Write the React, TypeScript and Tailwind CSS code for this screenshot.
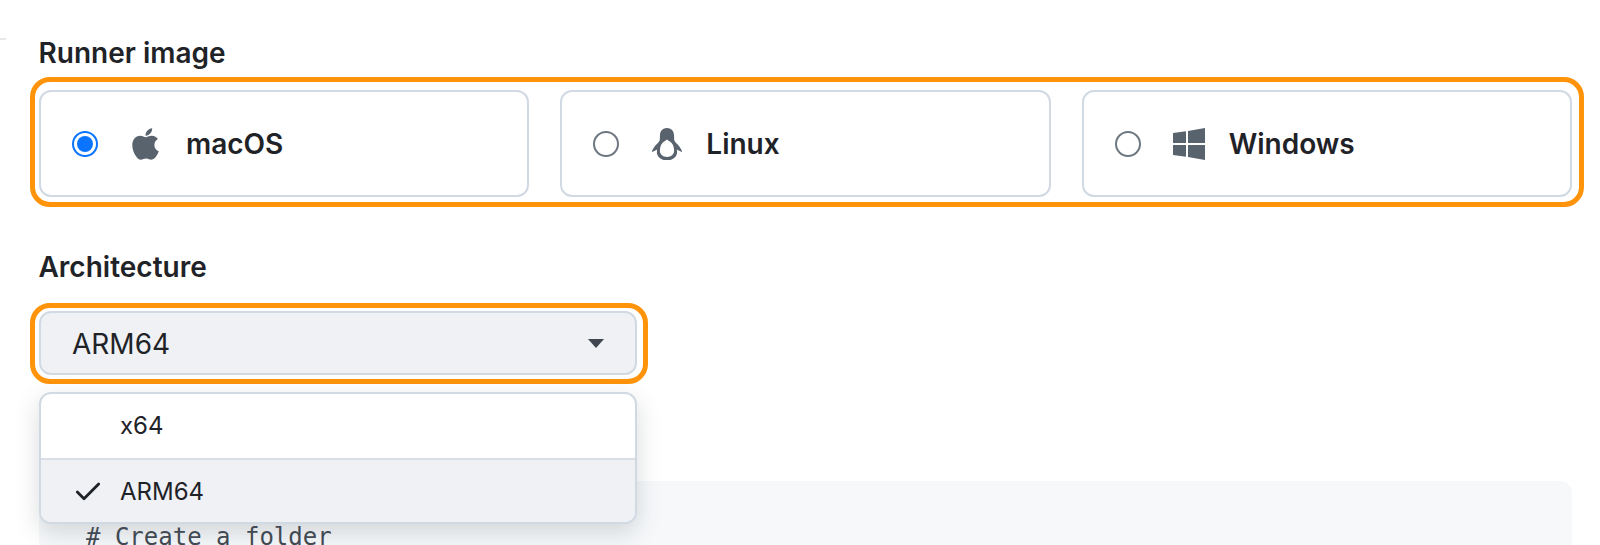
import React from 'react'
import { FaApple } from 'react-icons/fa'
import { Check } from 'lucide-react'

const LinuxIcon = () => (
  <svg viewBox="0 0 30 32" className="w-[30px] h-[32px] fill-[#59636e]">
    <path
      fillRule="evenodd"
      d="M15 0c4.200 0 6.900 3 7 7l.2 4.400c.2 1.600 1.200 2.900 2.700 4.400 2 2 3.800 4.400 5.100 7.200.2.500-.3 1-.8.7l-4.400-2.200c.2 1 .3 1.700.3 2.500 0 4.700-4.200 8.400-10.100 8.400S4.900 28.700 4.900 24c0-.8.100-1.500.3-2.500L.8 23.700c-.5.300-1-.2-.8-.7 1.300-2.800 3.100-5.200 5.100-7.200 1.500-1.500 2.500-2.800 2.700-4.400L8 7c.1-4 2.800-7 7-7zm0 11.600c-1.700 1.400-3.200 2-4.600 3.300-1.700 1.700-2.500 4.600-2.500 8.100 0 3.300 3.100 5.900 7.100 5.900s7.100-2.600 7.100-5.900c0-3.500-.8-6.400-2.500-8.100-1.400-1.300-2.900-1.900-4.600-3.300z"
    />
  </svg>
)

const WindowsIcon = () => (
  <svg viewBox="0 0 32 32" className="w-[32px] h-[32px] fill-[#59636e]">
    <polygon points="0,5 13,3.200 13,15 0,15" />
    <polygon points="15,2.900 32,0 32,15 15,15" />
    <polygon points="0,17 13,17 13,28.800 0,27" />
    <polygon points="15,17 32,17 32,32 15,29.100" />
  </svg>
)

const runners = [
  { name: 'macOS', selected: true, icon: <FaApple className="w-[36px] h-[36px] text-[#59636e]" />, iconBox: 'w-[33px] ml-[31px]', gap: 'ml-[24px]' },
  { name: 'Linux', selected: false, icon: <LinuxIcon />, iconBox: 'w-[30px] ml-[33px]', gap: 'ml-[24px]' },
  { name: 'Windows', selected: false, icon: <WindowsIcon />, iconBox: 'w-[32px] ml-[32px]', gap: 'ml-[24px]' },
]

const Radio = ({ selected }: { selected: boolean }) =>
  selected ? (
    <span className="flex items-center justify-center w-[26px] h-[26px] rounded-full border-2 border-[#0a74ff] bg-white">
      <span className="w-[16px] h-[16px] rounded-full bg-[#0a74ff]" />
    </span>
  ) : (
    <span className="w-[26px] h-[26px] rounded-full border-2 border-[#6e7781] bg-white" />
  )

const App = () => {
  return (
    <div className="relative w-[1600px] h-[545px] overflow-hidden bg-white pl-[39px] pr-[16px] font-['Inter',sans-serif] text-[#1f2328]">
      <div className="absolute left-0 top-[38px] w-[6px] h-[2px] bg-[#e6e8eb]" />

      <div className="pt-[34px] h-[72px] -ml-[0.5px] text-[28px] leading-[38px] font-semibold">Runner image</div>

      <div className="mt-[5px] -ml-[9px] rounded-[20px] border-[5px] border-[#ff9309] pt-[8px] pl-[4px] pr-[7px] h-[130px]">
        <div className="grid grid-cols-3 gap-[31px] w-full">
          {runners.map((r) => (
            <div key={r.name} className="flex items-center h-[107px] pl-[31px] rounded-[12px] border-2 border-[#d1d9e3] bg-white">
              <Radio selected={r.selected} />
              <span className={`flex justify-center ${r.iconBox}`}>{r.icon}</span>
              <span className={`text-[28px] font-semibold pt-[1px] ${r.gap}`}>{r.name}</span>
            </div>
          ))}
        </div>
      </div>

      <div className="mt-[41px] h-[38px] -ml-[0.5px] text-[28px] leading-[38px] font-semibold">Architecture</div>

      <div className="relative mt-[17px] w-[617.5px] -ml-[9px] rounded-[20px] border-[5px] border-[#ff9309] pt-[3px] pl-[4px] h-[81px]">
        <div className="flex items-center justify-between h-[64px] w-[598px] pl-[31px] pr-[31px] rounded-[12px] border-2 border-[#d1d9e3] bg-[#eff1f4] text-[28px]">
          <span className="pt-[2px]">ARM64</span>
          <span className="w-0 h-0 border-x-[8px] border-x-transparent border-t-[9px] border-t-[#3f4650]" />
        </div>
      </div>

      <div className="mt-[97px] w-[1533px] h-[200px] rounded-t-[12px] bg-[#f6f8fa] pl-[47px] pt-[40px] font-['DejaVu_Sans_Mono',monospace] text-[24px] leading-[32px] text-[#424a53]">
        # Create a folder
      </div>

      <div className="absolute left-[39px] top-[392px] w-[598px] h-[132px] rounded-[12px] border-2 border-[#d1d9e3] bg-white overflow-hidden shadow-[0_8px_24px_rgba(66,74,83,0.2)] text-[24px]">
        <div className="flex items-center h-[64px] pl-[79px]">x64</div>
        <div className="flex items-center h-[66px] border-t-2 border-[#d8dee4] bg-[#eff1f4] pl-[31px]">
          <Check className="w-[32px] h-[32px] text-[#1f2328] mr-[16px]" strokeWidth={2.1} />
          <span>ARM64</span>
        </div>
      </div>
    </div>
  )
}

export default App
